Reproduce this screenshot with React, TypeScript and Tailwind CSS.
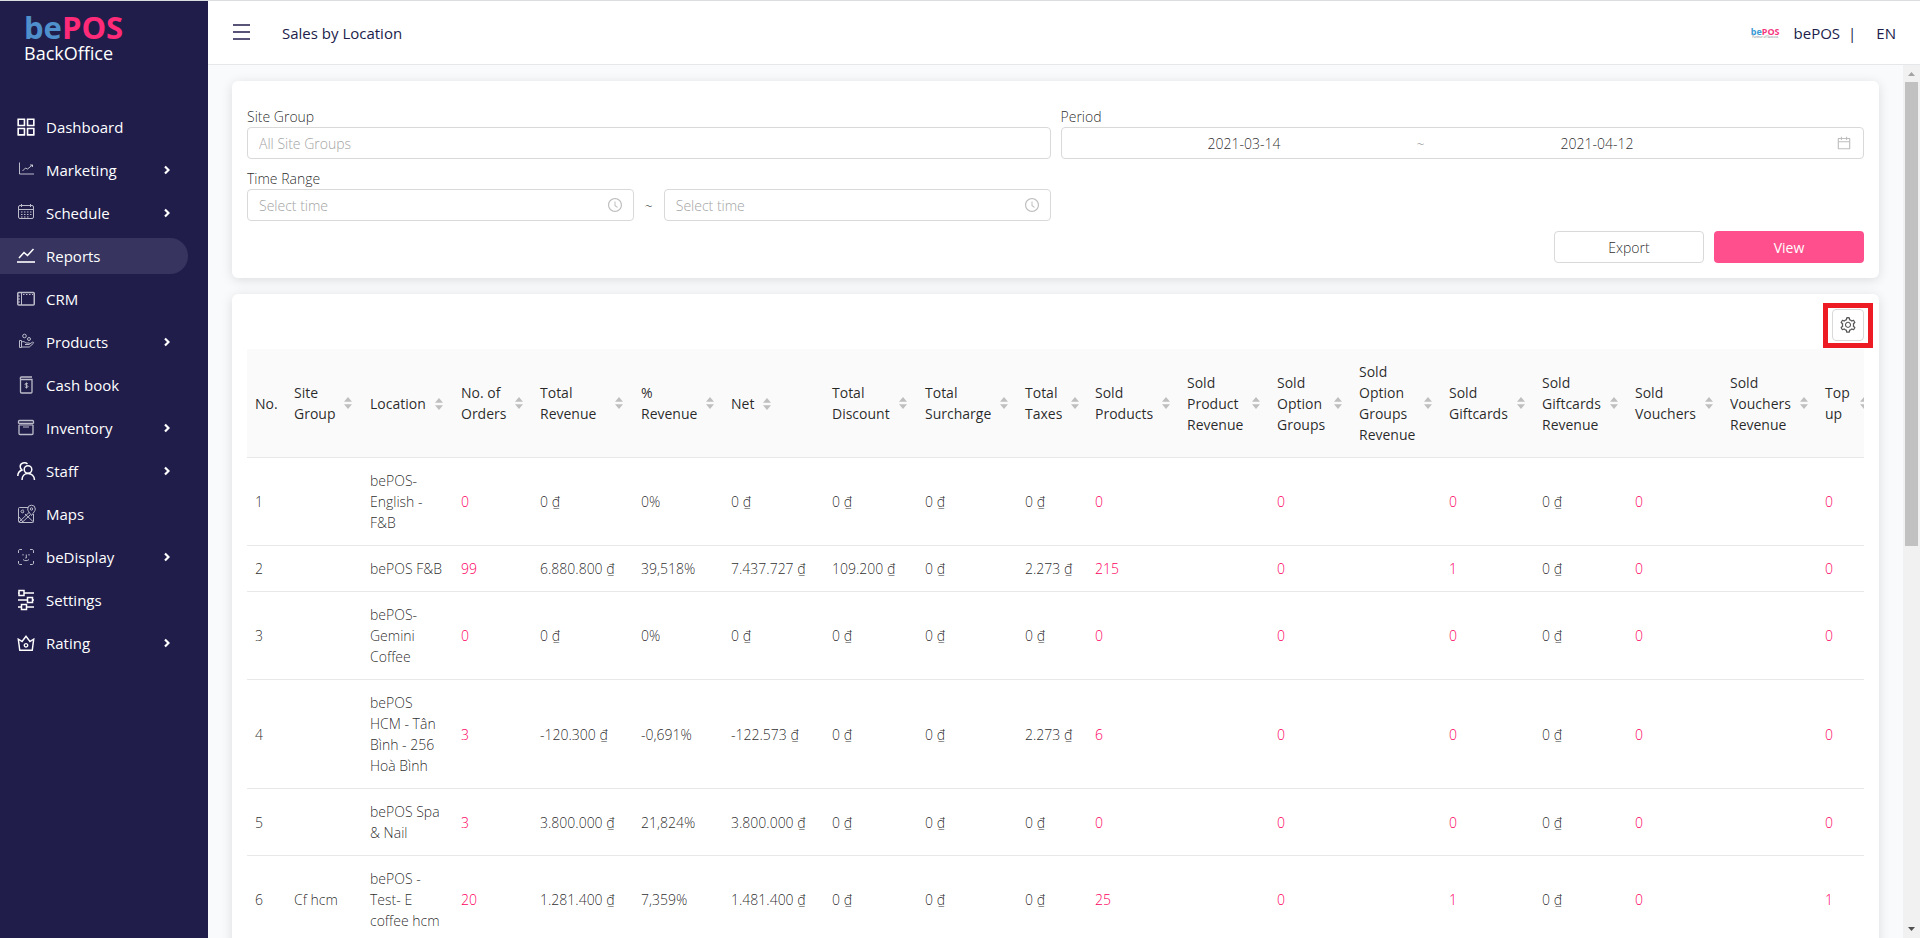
import { ReactNode } from "react";
import {
  AiOutlineAppstore,
  AiOutlineCalendar,
  AiOutlineClockCircle,
  AiOutlineCrown,
  AiOutlineSetting,
} from "react-icons/ai";

type MenuItemType = {
  name: string;
  icon: ReactNode;
  hasChildren?: boolean;
  active?: boolean;
};

type ColumnType = {
  title: string;
  width: number;
  sortable: boolean;
  link?: boolean;
};

const LineIcon = ({
  children,
  thin,
}: {
  children: ReactNode;
  thin?: boolean;
}) => (
  <svg
    viewBox="0 0 18 18"
    className={`size-[18px] overflow-visible ${thin ? "opacity-70" : ""}`}
    fill="none"
    stroke="currentColor"
    strokeWidth={thin ? 1 : 1.5}
    aria-hidden="true"
  >
    {children}
  </svg>
);

const menu: MenuItemType[] = [
  { name: "Dashboard", icon: <AiOutlineAppstore size={24} className="shrink-0" /> },
  {
    name: "Marketing",
    hasChildren: true,
    icon: (
      <LineIcon thin>
        <path d="M2.500 1.500v11.500h14.500M5.500 10l3-3 2 1 5-4M13 4h2.500v2" />
      </LineIcon>
    ),
  },
  {
    name: "Schedule",
    hasChildren: true,
    icon: (
      <LineIcon thin>
        <rect x="1.500" y="1.500" width="15" height="13" rx="1.500" />
        <path d="M1.500 5.500h15M4.500 0v3M13.500 0v3" />
        <path d="M4 8h11M4 10.500h11M4 13h8" strokeDasharray="1.500 1.500" />
      </LineIcon>
    ),
  },
  {
    name: "Reports",
    active: true,
    icon: (
      <LineIcon>
        <path d="M2 11l5-5.500 3.500 3 6-6.500" />
        <path d="M0 15h18" strokeWidth="2" opacity="0.8" />
      </LineIcon>
    ),
  },
  {
    name: "CRM",
    icon: (
      <LineIcon thin>
        <rect x="0.750" y="2.500" width="16.500" height="12.500" rx="1" strokeWidth="1.500" />
        <path d="M4.500 2.500v12.500M1 6h2M1 9h2M1 12h2" />
        <path d="M6 4.500h10" strokeDasharray="1.500 1.500" />
      </LineIcon>
    ),
  },
  {
    name: "Products",
    hasChildren: true,
    icon: (
      <LineIcon thin>
        <circle cx="7.500" cy="3" r="1.800" />
        <circle cx="12" cy="6" r="1.500" />
        <path d="M2.500 7.500h2v7h-2zM4.500 9c2-1 3.500 0 4.500 1h3c1 0 1 1.500 0 1.500H8M12.500 11l3-1.800c1-.4 1.500.6.8 1.200l-4 3.600H4.500" />
      </LineIcon>
    ),
  },
  {
    name: "Cash book",
    icon: (
      <LineIcon thin>
        <path d="M3.500 3.500v12.500c0 .6.400 1 1 1h9.500c.6 0 1-.4 1-1V3.500zM3.500 3.500c-.6-1.200 0-2.500 1-2.500h10.500" strokeWidth="1.300" />
        <path d="M11 8c-.8-1-3-.8-3 .3 0 1.400 3 .8 3 2.200 0 1.200-2.300 1.400-3.200.2M9.500 6.500v6" />
      </LineIcon>
    ),
  },
  {
    name: "Inventory",
    hasChildren: true,
    icon: (
      <LineIcon thin>
        <path d="M1.500 4.500v-2c0-.6.400-1 1-1h13c.6 0 1 .4 1 1v2M1.500 4.500h15" strokeWidth="1.300" />
        <path d="M2 6v8.500c0 .6.400 1 1 1h12c.6 0 1-.4 1-1V6" strokeWidth="1.300" />
        <path d="M2 6h14M6 8h6" />
      </LineIcon>
    ),
  },
  {
    name: "Staff",
    hasChildren: true,
    icon: (
      <LineIcon>
        <circle cx="11" cy="7.500" r="3.800" />
        <path d="M5 18c0-4 2.500-6.500 6-6.500s6.500 2.500 6.500 6.500" />
        <path d="M10.500 1.800C8-.2 3.200.8 3.200 4.500c0 1.700.8 2.700 1.800 3.500C2.500 9 .8 11 .8 14" />
      </LineIcon>
    ),
  },
  {
    name: "Maps",
    icon: (
      <LineIcon thin>
        <path d="M11 2.500H2.500c-.6 0-1 .4-1 1v13c0 .6.400 1 1 1h13c.6 0 1-.4 1-1V9" />
        <path d="M14.500 10.500c-2-3-3.800-4.500-3.800-6.500a3.800 3.800 0 0 1 7.600 0c0 2-1.800 3.500-3.800 6.500z" />
        <circle cx="14.500" cy="4" r="1.200" />
        <path d="M2 17L12 7.500M5 17.500l8-7.500M8 9l8.500 8M2 12l4 5M7 5.500c-1-1-3-.5-3 1s2.500 2 3 .3H5.800" />
      </LineIcon>
    ),
  },
  {
    name: "beDisplay",
    hasChildren: true,
    icon: (
      <LineIcon thin>
        <path d="M1.500 5V3c0-1 .5-1.500 1.500-1.500h2M13 1.500h2c1 0 1.500.5 1.500 1.500v2M16.500 13v2c0 1-.5 1.500-1.500 1.500h-2M5 16.500H3c-1 0-1.500-.5-1.500-1.500v-2" />
        <path d="M6 6v1.500M12 6v1.500M9.300 6.500v3.500h-1M6 11.500c1.500 1.600 4.500 1.600 6 0" />
      </LineIcon>
    ),
  },
  {
    name: "Settings",
    icon: (
      <LineIcon>
        <path d="M1 2h1M7 2h10M1 9h9.500M15.500 9H17M1 16h3.500M10 16h7" />
        <rect x="2" y="-0.500" width="5" height="5" />
        <rect x="10.500" y="6.500" width="5" height="5" />
        <rect x="4.500" y="13.500" width="5" height="5" />
      </LineIcon>
    ),
  },
  {
    name: "Rating",
    hasChildren: true,
    icon: <AiOutlineCrown size={22} className="shrink-0" />,
  },
];

const columns: ColumnType[] = [
  { title: "No.", width: 39, sortable: false },
  { title: "Site Group", width: 76, sortable: true },
  { title: "Location", width: 91, sortable: true },
  { title: "No. of Orders", width: 79, sortable: true, link: true },
  { title: "Total Revenue", width: 101, sortable: true },
  { title: "% Revenue", width: 90, sortable: true },
  { title: "Net", width: 101, sortable: true },
  { title: "Total Discount", width: 93, sortable: true },
  { title: "Total Surcharge", width: 100, sortable: true },
  { title: "Total Taxes", width: 70, sortable: true },
  { title: "Sold Products", width: 92, sortable: true, link: true },
  { title: "Sold Product Revenue", width: 90, sortable: true },
  { title: "Sold Option Groups", width: 82, sortable: true, link: true },
  { title: "Sold Option Groups Revenue", width: 90, sortable: true },
  { title: "Sold Giftcards", width: 93, sortable: true, link: true },
  { title: "Sold Giftcards Revenue", width: 93, sortable: true },
  { title: "Sold Vouchers", width: 95, sortable: true, link: true },
  { title: "Sold Vouchers Revenue", width: 95, sortable: true },
  { title: "Top up", width: 61, sortable: true, link: true },
];

const rows: string[][] = [
  ["1", "", "bePOS-English - F&B", "0", "0 ₫", "0%", "0 ₫", "0 ₫", "0 ₫", "0 ₫", "0", "", "0", "", "0", "0 ₫", "0", "", "0"],
  ["2", "", "bePOS F&B", "99", "6.880.800 ₫", "39,518%", "7.437.727 ₫", "109.200 ₫", "0 ₫", "2.273 ₫", "215", "", "0", "", "1", "0 ₫", "0", "", "0"],
  ["3", "", "bePOS-Gemini Coffee", "0", "0 ₫", "0%", "0 ₫", "0 ₫", "0 ₫", "0 ₫", "0", "", "0", "", "0", "0 ₫", "0", "", "0"],
  ["4", "", "bePOS HCM - Tân Bình - 256 Hoà Bình", "3", "-120.300 ₫", "-0,691%", "-122.573 ₫", "0 ₫", "0 ₫", "2.273 ₫", "6", "", "0", "", "0", "0 ₫", "0", "", "0"],
  ["5", "", "bePOS Spa & Nail", "3", "3.800.000 ₫", "21,824%", "3.800.000 ₫", "0 ₫", "0 ₫", "0 ₫", "0", "", "0", "", "0", "0 ₫", "0", "", "0"],
  ["6", "Cf hcm", "bePOS - Test- E coffee hcm", "20", "1.281.400 ₫", "7,359%", "1.481.400 ₫", "0 ₫", "0 ₫", "0 ₫", "25", "", "0", "", "1", "0 ₫", "0", "", "1"],
];

const Chevron = () => (
  <svg viewBox="0 0 6 10" className="h-2.5 w-1.5" fill="none" stroke="currentColor" strokeWidth="2.200" aria-hidden="true">
    <path d="M1 1.500l3.500 3.500L1 8.500" />
  </svg>
);

const Sorter = () => (
  <svg viewBox="0 0 12 12" className="size-3 shrink-0 fill-[#bfbfbf]" aria-hidden="true">
    <path d="M6 0l4 4.800H2zM6 12l4-4.800H2z" />
  </svg>
);

const Sidebar = () => (
  <aside className="flex w-52 shrink-0 flex-col bg-[#201d4b] text-white">
    <div className="h-[108px] pl-6 pt-1.5">
      <p className="text-[31px] font-bold leading-10">
        <span className="text-[#4f8fcc]">be</span>
        <span className="text-[#ff2a78]">POS</span>
      </p>
      <p className="-mt-1 text-lg leading-5">BackOffice</p>
    </div>
    <nav>
      <ul className="flex flex-col gap-[7px]">
        {menu.map((item) => (
          <li key={item.name}>
            <a
              href="#"
              className={`mr-5 flex h-9 items-center rounded-r-full pl-[17px] pr-[18px] ${item.active ? "bg-[#37355f]" : ""}`}
            >
              <span className="mr-[11px] flex size-[18px] items-center justify-center">{item.icon}</span>
              <span className="flex-1">{item.name}</span>
              {item.hasChildren && <Chevron />}
            </a>
          </li>
        ))}
      </ul>
    </nav>
  </aside>
);

const Header = () => (
  <header className="flex h-16 shrink-0 items-center border-b border-[#e6e7e9] bg-white pl-[25px] pr-6 text-[#201d4b]">
    <button aria-label="Toggle menu" className="pb-0.5">
      <svg viewBox="0 0 17 16" className="h-4 w-[17px]" stroke="currentColor" strokeWidth="1.500" aria-hidden="true">
        <path d="M0 1h17M0 8h17M0 15h17" />
      </svg>
    </button>
    <h1 className="ml-8 flex-1">Sales by Location</h1>
    <div className="mr-3.5 text-center">
      <p className="text-[9px] font-bold leading-[9px]">
        <span className="text-[#3b9ad4]">be</span>
        <span className="text-[#f5367f]">POS</span>
      </p>
      <p className="text-[3px] leading-[3px] text-gray-500">Partner of Success</p>
    </div>
    <span>bePOS</span>
    <span className="ml-2">|</span>
    <button className="ml-5">EN</button>
  </header>
);

const TimeInput = ({ id, label }: { id: string; label: string }) => (
  <div className="flex h-8 min-w-0 items-center rounded border border-[#d9d9d9] pl-[11px] pr-2.5">
    <input
      id={id}
      aria-label={label}
      placeholder="Select time"
      className="min-w-0 flex-1 outline-none placeholder:text-[#a3a3a3]"
    />
    <AiOutlineClockCircle size={16} className="text-[#bfbfbf]" />
  </div>
);

const Filters = () => (
  <form className="rounded-md bg-white px-[15px] pb-[15px] pt-[25px] shadow-[0_2px_12px_rgba(0,0,0,0.12)]">
    <div className="grid grid-cols-2 gap-x-2.5 gap-y-[9px]">
      <div>
        <label htmlFor="siteGroup" className="block">
          Site Group
        </label>
        <input
          id="siteGroup"
          placeholder="All Site Groups"
          className="h-8 w-full rounded border border-[#d9d9d9] px-[11px] outline-none placeholder:text-[#a3a3a3]"
        />
      </div>
      <div>
        <label htmlFor="from" className="block">
          Period
        </label>
        <div className="flex h-8 items-center rounded border border-[#d9d9d9] px-[11px]">
          <input id="from" defaultValue="2021-03-14" className="w-[44%] text-center outline-none" />
          <span className="w-2.5 text-center text-[#8c8c8c]">~</span>
          <input aria-label="Period end" defaultValue="2021-04-12" className="w-[44%] text-center outline-none" />
          <AiOutlineCalendar size={16} className="ml-auto text-[#bfbfbf]" />
        </div>
      </div>
      <div>
        <label htmlFor="timeFrom" className="block">
          Time Range
        </label>
        <div className="grid grid-cols-[1fr_30px_1fr] items-center">
          <TimeInput id="timeFrom" label="Time from" />
          <span className="text-center">~</span>
          <TimeInput id="timeTo" label="Time to" />
        </div>
      </div>
    </div>
    <div className="mt-2.5 flex justify-end gap-2.5">
      <button type="button" className="h-8 w-[150px] rounded border border-[#d9d9d9] bg-white">
        Export
      </button>
      <button type="button" className="h-8 w-[150px] rounded bg-[#ff508d] font-normal text-white">
        View
      </button>
    </div>
  </form>
);

const ReportTable = () => (
  <section className="mt-4 rounded-md bg-white px-[15px] pb-4 pt-[15px] shadow-[0_2px_12px_rgba(0,0,0,0.12)]">
    <div className="mb-2 flex justify-end">
      <div className="relative">
        <button
          aria-label="Table settings"
          className="flex size-8 items-center justify-center rounded border border-[#d9d9d9] text-[#595959]"
        >
          <AiOutlineSetting size={18} />
        </button>
        <span className="pointer-events-none absolute -bottom-[7px] -left-[9px] -right-[9px] -top-1.5 border-[5px] border-[#ed1c24]" />
      </div>
    </div>
    <div className="overflow-x-auto">
      <table className="w-full min-w-[1630px] table-fixed text-left">
        <colgroup>
          {columns.map((col) => (
            <col key={col.title} style={{ width: col.width }} />
          ))}
        </colgroup>
        <thead className="bg-[#fafafa] text-black/85">
          <tr className="border-b border-[#e8e8e8]">
            {columns.map((col) => (
              <th key={col.title} className="px-2 py-3 font-normal">
                {col.sortable ? (
                  <button className="inline-flex items-center gap-[7px] text-left align-middle">
                    <span>{col.title}</span>
                    <Sorter />
                  </button>
                ) : (
                  col.title
                )}
              </th>
            ))}
          </tr>
        </thead>
        <tbody>
          {rows.map((row) => (
            <tr key={row[0]} className="border-b border-[#e8e8e8]">
              {row.map((value, index) => (
                <td key={index} className="px-2 py-3">
                  {columns[index].link && value ? (
                    <a href="#" className="text-[#ff0062]">
                      {value}
                    </a>
                  ) : (
                    value
                  )}
                </td>
              ))}
            </tr>
          ))}
        </tbody>
      </table>
    </div>
  </section>
);

const Scrollbar = () => (
  <div className="flex w-[17px] shrink-0 flex-col items-center bg-[#f1f1f1]">
    <svg viewBox="0 0 17 17" className="size-[17px] fill-[#a3a3a3]" aria-hidden="true">
      <path d="M5 11h7L8.500 7z" />
    </svg>
    <div className="w-[13px] flex-[464] bg-[#c1c1c1]" />
    <div className="flex-[375]" />
    <svg viewBox="0 0 17 17" className="size-[17px] fill-[#505050]" aria-hidden="true">
      <path d="M5 6h7L8.500 10z" />
    </svg>
  </div>
);

const App = () => {
  return (
    <div className="flex h-screen overflow-hidden border-t border-[#dcdde1] bg-[#f9fafc] font-['Open_Sans','Noto_Sans',sans-serif] text-[15px] leading-6">
      <Sidebar />
      <div className="flex min-w-0 flex-1 flex-col">
        <Header />
        <div className="flex min-h-0 flex-1">
          <main className="min-w-0 flex-1 overflow-hidden px-6 pt-4 text-sm leading-[21px] font-light text-black/85">
            <Filters />
            <ReportTable />
          </main>
          <Scrollbar />
        </div>
      </div>
    </div>
  );
};

export default App;
